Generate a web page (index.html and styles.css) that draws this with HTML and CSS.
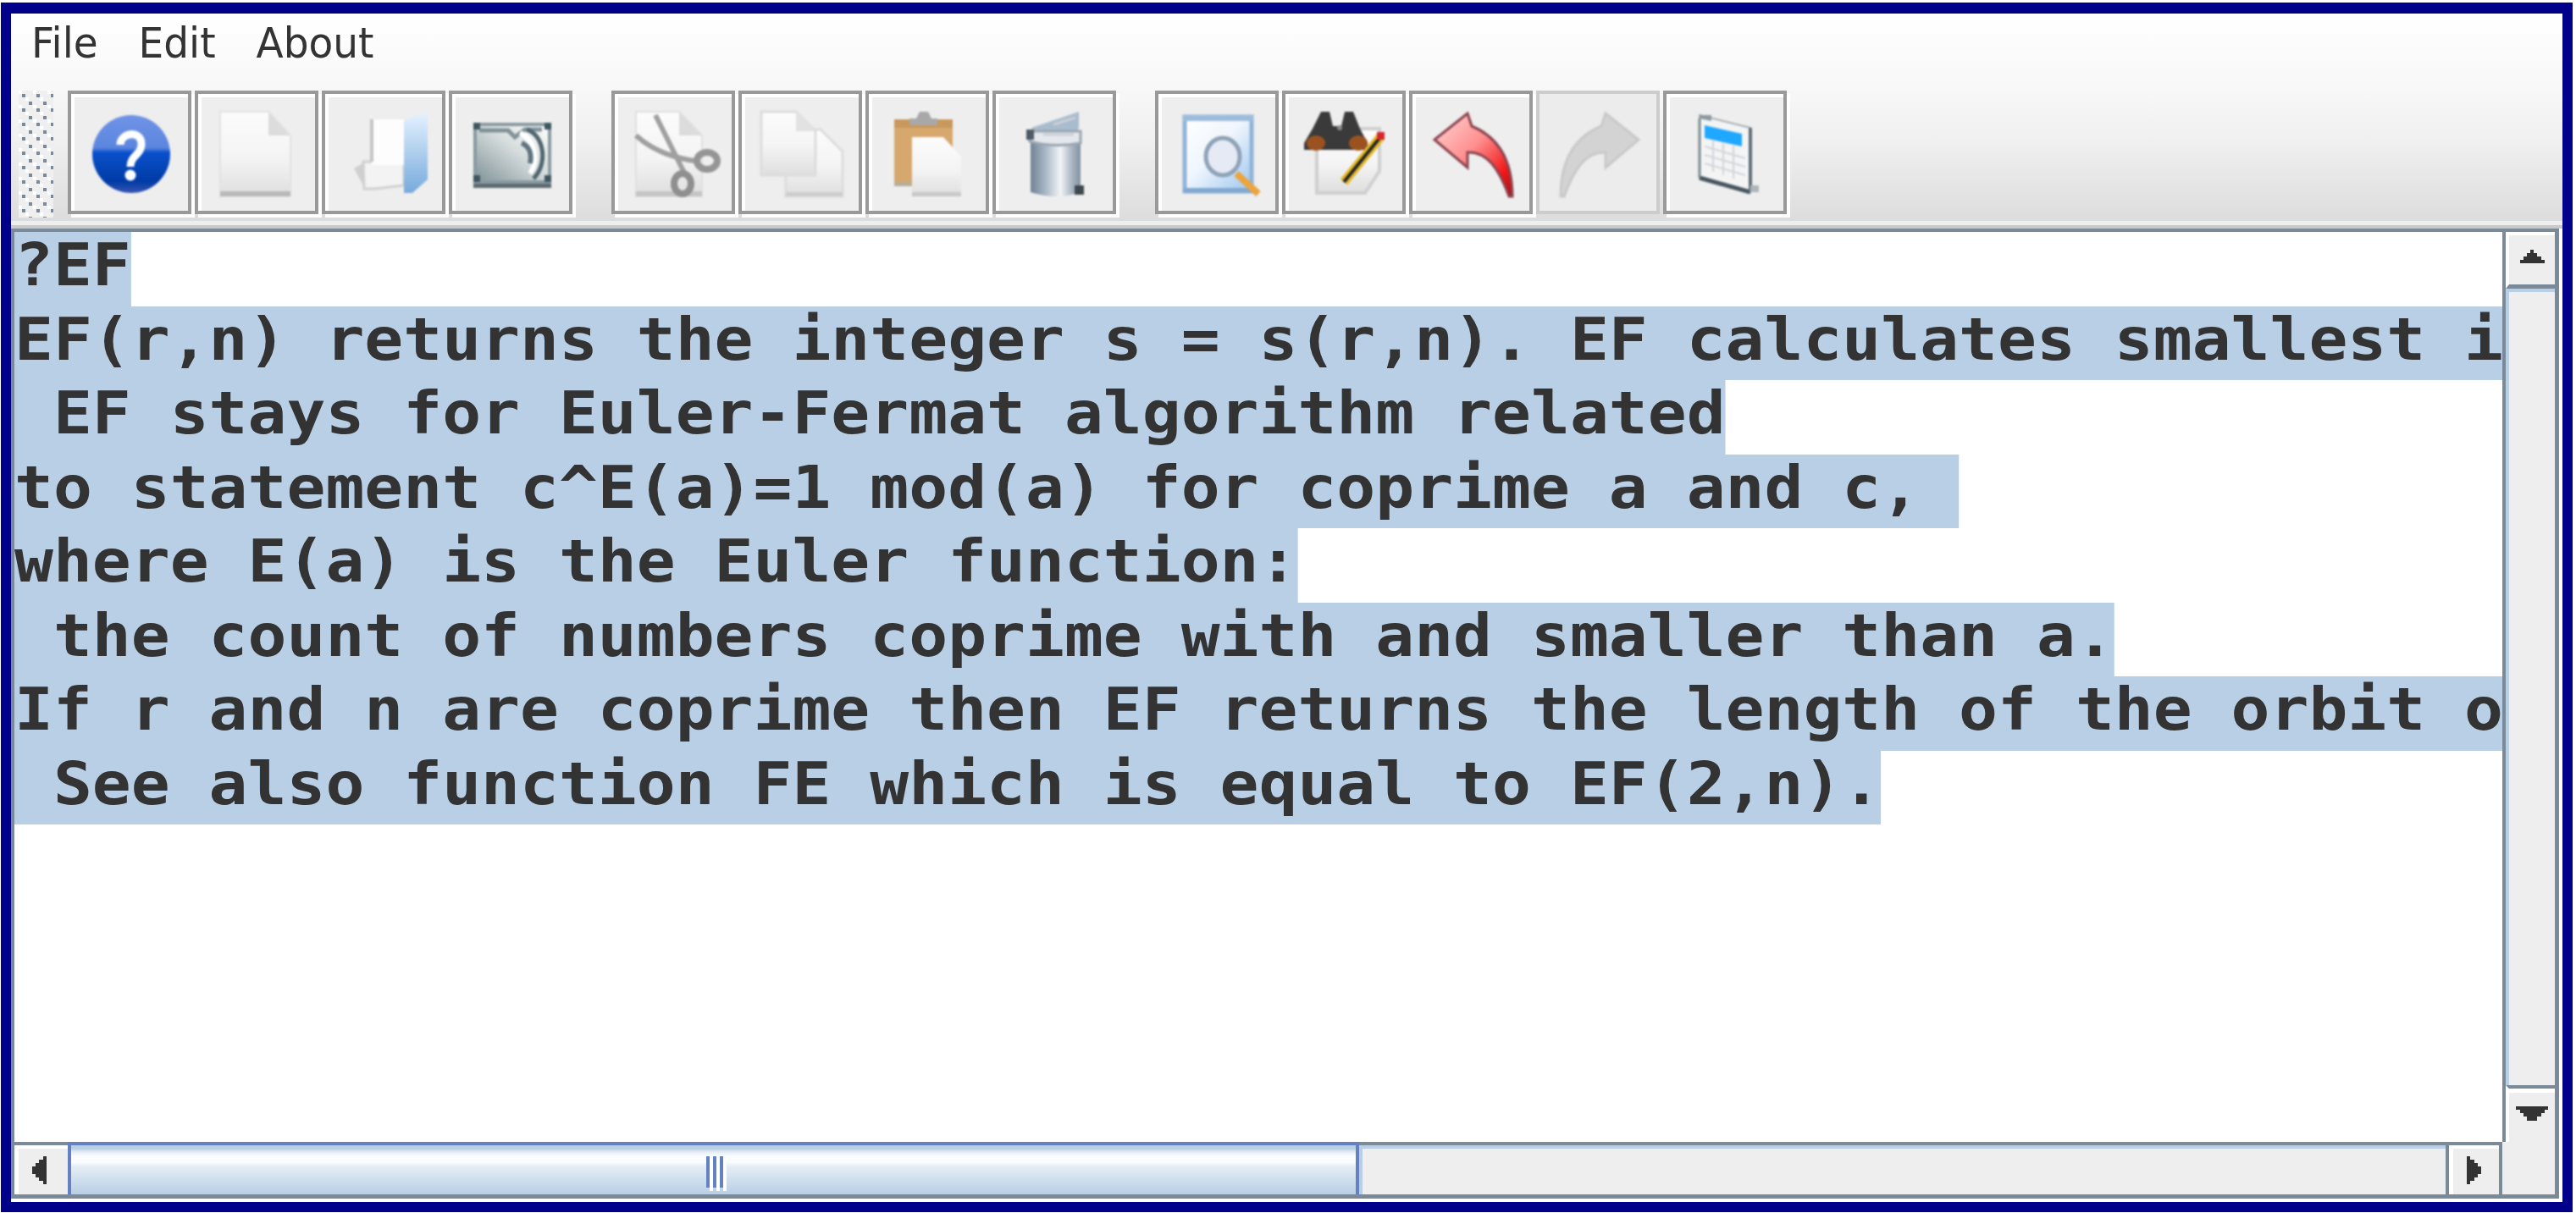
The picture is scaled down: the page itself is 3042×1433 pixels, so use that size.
FILE: index.html
```html
<!DOCTYPE html>
<html lang="en">
<head>
<meta charset="utf-8">
<title>EF</title>
<link rel="stylesheet" href="styles.css">
</head>
<body>
<svg class="defs" aria-hidden="true">
  <defs>
    <linearGradient id="gBlue" x1="0" y1="0" x2="0" y2="1"><stop offset="0" stop-color="#6f93e6"/><stop offset=".42" stop-color="#5c86df"/><stop offset=".48" stop-color="#0a50cc"/><stop offset=".85" stop-color="#003ba6"/><stop offset="1" stop-color="#3a55b0"/></linearGradient>
    <linearGradient id="gPage" x1="0" y1="0" x2="0" y2="1"><stop offset="0" stop-color="#fcfcfc"/><stop offset=".55" stop-color="#f4f4f4"/><stop offset="1" stop-color="#dedede"/></linearGradient>
    <linearGradient id="gFold" x1="0" y1="0" x2="0" y2="1"><stop offset="0" stop-color="#e6f3ff"/><stop offset="1" stop-color="#77aadc"/></linearGradient>
    <linearGradient id="gDrive" x1="0" y1="1" x2="1" y2="0"><stop offset="0" stop-color="#7f9298"/><stop offset=".55" stop-color="#d6dcdc"/><stop offset="1" stop-color="#ffffff"/></linearGradient>
    <linearGradient id="gTrash" x1="0" y1="0" x2="1" y2="0"><stop offset="0" stop-color="#6f8294"/><stop offset=".3" stop-color="#a9b8c6"/><stop offset=".6" stop-color="#f2f4f7"/><stop offset=".8" stop-color="#b0bcc7"/><stop offset="1" stop-color="#7f90a0"/></linearGradient>
    <linearGradient id="gFind" x1="0" y1="0" x2="1" y2="1"><stop offset="0" stop-color="#ffffff"/><stop offset=".45" stop-color="#f0f6fd"/><stop offset="1" stop-color="#9cc6ef"/></linearGradient>
    <linearGradient id="gUndo" x1="0" y1="0" x2="1" y2="1"><stop offset="0" stop-color="#ffd8d8"/><stop offset=".45" stop-color="#ff8f8f"/><stop offset=".8" stop-color="#f01818"/><stop offset="1" stop-color="#a81010"/></linearGradient>
    <pattern id="gripDots" width="17" height="17" patternUnits="userSpaceOnUse">
      <rect x="0" y="0" width="4" height="4" fill="#fff"/>
      <rect x="4" y="4" width="4" height="4" fill="#7a8a99"/>
      <rect x="8" y="8" width="4" height="4" fill="#fff"/>
      <rect x="12" y="13" width="4" height="4" fill="#7a8a99"/>
    </pattern>
  </defs>
</svg>

<div class="frame">
  <nav class="menu">
    <div class="menu-list">
      <span class="menu-item">File</span>
      <span class="menu-item">Edit</span>
      <span class="menu-item">About</span>
    </div>
  </nav>

  <div class="toolbar">
    <svg class="grip" width="41" height="150"><rect width="41" height="150" fill="#efefef"/><rect width="41" height="150" fill="url(#gripDots)"/></svg>
    <div class="tool-groups">
      <div class="tool-group">
        <div class="tool"><svg class="icon" viewBox="4 4 138 138">
          <circle cx="75" cy="75" r="46" fill="url(#gBlue)"/>
          <path d="M62 64C62 50 86 46 87 62C88 76 74 76 74 90" fill="none" stroke="#fff" stroke-width="9"/>
          <circle cx="74" cy="100" r="6.5" fill="#fff"/>
        </svg></div>
        <div class="tool"><svg class="icon" viewBox="4 4 138 138">
          <path d="M30 25H87L113 53V125H30Z" fill="url(#gPage)" stroke="#e2e2e2" stroke-width="2"/>
          <path d="M87 25V53H113Z" fill="#dcdcdc"/>
          <rect x="30" y="119" width="83" height="6" fill="#b9b9b9"/>
        </svg></div>
        <div class="tool"><svg class="icon" viewBox="4 4 138 138">
          <path d="M38 92L52 84L58 114H50Z" fill="#cfcfcf"/>
          <path d="M49 84H97V112L62 116H50Z" fill="#f3f3f3" stroke="#d0d0d0" stroke-width="3"/>
          <rect x="59" y="34" width="38" height="54" fill="#fdfdfd"/>
          <rect x="57" y="34" width="4" height="50" fill="#c4c4c4"/>
          <path d="M97 35L125 25V105L107 121H97Z" fill="url(#gFold)"/>
        </svg></div>
        <div class="tool"><svg class="icon" viewBox="4 4 138 138">
          <rect x="29" y="108" width="92" height="7" fill="#5c6b70"/>
          <rect x="31" y="40" width="88" height="68" fill="url(#gDrive)" stroke="#8a9aa0" stroke-width="4"/>
          <path d="M36 47H70L78 55L90 46H110" fill="none" stroke="#7f9298" stroke-width="5"/>
          <path d="M92 46C112 52 118 86 100 104" fill="none" stroke="#51666f" stroke-width="5"/>
          <path d="M84 50C102 58 106 84 96 98" fill="none" stroke="#fff" stroke-width="6"/>
          <path d="M86 62C96 66 98 76 96 86" fill="none" stroke="#5f7580" stroke-width="6"/>
          <path d="M29 38h8v8h-8zM113 38h8v8h-8zM29 100h8v8h-8zM113 100h8v8h-8z" fill="#3f5560"/>
        </svg></div>
      </div>
      <div class="tool-group">
        <div class="tool"><svg class="icon" viewBox="4 4 138 138">
          <path d="M29 25H80L107 53V125H29Z" fill="url(#gPage)" stroke="#e0e0e0" stroke-width="2"/>
          <path d="M80 25V53H107Z" fill="#dcdcdc"/>
          <rect x="29" y="119" width="78" height="6" fill="#c4c4c4"/>
          <path d="M52 29L86 97M29 53C50 72 75 80 104 84" fill="none" stroke="#a0a0a0" stroke-width="6"/>
          <ellipse cx="113" cy="83" rx="12" ry="10" fill="none" stroke="#959595" stroke-width="8"/>
          <ellipse cx="84" cy="110" rx="10" ry="12" fill="none" stroke="#8f8f8f" stroke-width="8"/>
        </svg></div>
        <div class="tool"><svg class="icon" viewBox="4 4 138 138">
          <path d="M56 46H97L123 72V125H56Z" fill="url(#gPage)" stroke="#dcdcdc" stroke-width="3"/>
          <rect x="56" y="120" width="67" height="5" fill="#cdcdcd"/>
          <path d="M27 25H68L91 48V100H27Z" fill="url(#gPage)" stroke="#dcdcdc" stroke-width="3"/>
          <path d="M68 25V48H91Z" fill="#e2e2e2"/>
        </svg></div>
        <div class="tool"><svg class="icon" viewBox="4 4 138 138">
          <rect x="34" y="34" width="69" height="79" fill="#d6a86e"/>
          <rect x="34" y="34" width="69" height="10" fill="#c9985c"/>
          <rect x="34" y="108" width="20" height="5" fill="#b8ad9c"/>
          <path d="M52 41V33H60L64 25H74L78 33H85V41Z" fill="#a8a8a8"/>
          <path d="M55 55H92L113 78V125H55Z" fill="url(#gPage)"/>
          <rect x="55" y="120" width="58" height="5" fill="#c8c8c8"/>
        </svg></div>
        <div class="tool"><svg class="icon" viewBox="4 4 138 138">
          <path d="M45 56H104V120Q75 130 45 120Z" fill="url(#gTrash)"/>
          <path d="M46 44L102 25V44L100 48L48 48Z" fill="#a9bccd"/>
          <path d="M42 48H104V62Q72 68 44 60Z" fill="#e4e8ec" stroke="#9aa6b1" stroke-width="3"/>
          <path d="M60 52H96M72 40L98 32" stroke="#c8d0d8" stroke-width="3"/>
          <rect x="40" y="46" width="9" height="12" fill="#4e5a64"/>
          <rect x="97" y="112" width="11" height="11" fill="#3f484f"/>
        </svg></div>
      </div>
      <div class="tool-group">
        <div class="tool"><svg class="icon" viewBox="4 4 138 138">
          <rect x="35" y="31" width="79" height="88" fill="url(#gFind)" stroke="#8fb2d6" stroke-width="5"/>
          <rect x="33" y="29" width="83" height="7" fill="#9dbcdb"/>
          <rect x="33" y="115" width="83" height="6" fill="#82a8d2"/>
          <ellipse cx="80" cy="78" rx="20" ry="22" fill="#e6eaf4" stroke="#8fa3b8" stroke-width="5"/>
          <path d="M96 98L122 122" stroke="#eaa53f" stroke-width="8"/>
        </svg></div>
        <div class="tool"><svg class="icon" viewBox="4 4 138 138">
          <path d="M41 45H115V95L98 121H41Z" fill="url(#gPage)" stroke="#cfcfcf" stroke-width="4"/>
          <path d="M46 25H56L60 42H70L74 25H84L92 45L101 62V70H26V62L36 45Z" fill="#3a3a3a"/>
          <circle cx="68" cy="44" r="3" fill="#8a8a8a"/>
          <ellipse cx="40" cy="62" rx="11" ry="9" fill="#9c5220"/>
          <ellipse cx="90" cy="62" rx="11" ry="9" fill="#9c5220"/>
          <path d="M73 108L116 55" stroke="#e3b92b" stroke-width="11"/>
          <path d="M73 108L116 55" stroke="#222" stroke-width="4"/>
          <rect x="112" y="49" width="9" height="9" fill="#d8252c"/>
        </svg></div>
        <div class="tool"><svg class="icon" viewBox="4 4 138 138">
          <path d="M69 27L30 58L69 91V73C92 72 106 92 118 125H122C122 86 108 56 74 42Z" fill="url(#gUndo)" stroke="#8c4450" stroke-width="3"/>
        </svg></div>
        <div class="tool tool-off"><svg class="icon" viewBox="4 4 138 138">
          <path d="M82 27L121 58L82 91V73C59 72 45 92 33 125H29C29 86 43 56 77 42Z" fill="#d3d3d3" stroke="#c9c9c9" stroke-width="3"/>
        </svg></div>
        <div class="tool"><svg class="icon" viewBox="4 4 138 138">
          <path d="M43 29L103 44V120L43 103Z" fill="#f4f4f4" stroke="#a5aeb4" stroke-width="2"/>
          <path d="M49 41L93 51V66L49 56Z" fill="#1fa8ff"/>
          <path d="M43 29H57V36L43 33Z" fill="#8b9aa0"/>
          <path d="M43 103L103 120" stroke="#46555f" stroke-width="5"/>
          <path d="M43 33V103" stroke="#7b8891" stroke-width="3"/>
          <path d="M103 44V120" stroke="#5e6c76" stroke-width="4"/>
          <path d="M49 66L97 80M49 76L97 90M49 86L97 100M59 58V96M71 62V100M83 65V104" stroke="#d0d6db" stroke-width="2"/>
          <rect x="103" y="112" width="10" height="8" fill="#aeb4b8"/>
        </svg></div>
      </div>
    </div>
  </div>
  <div class="separator"></div>

  <div class="pane">
    <div class="pane-box">
      <div class="pane-main">
        <div class="viewport">
          <div class="text">
            <div class="line"><span class="sel">?EF</span></div>
            <div class="line"><span class="sel">EF(r,n) returns the integer s = s(r,n). EF calculates smallest i</span></div>
            <div class="line"><span class="sel"> EF stays for Euler-Fermat algorithm related</span></div>
            <div class="line"><span class="sel">to statement c^E(a)=1 mod(a) for coprime a and c, </span></div>
            <div class="line"><span class="sel">where E(a) is the Euler function:</span></div>
            <div class="line"><span class="sel"> the count of numbers coprime with and smaller than a.</span></div>
            <div class="line"><span class="sel">If r and n are coprime then EF returns the length of the orbit o</span></div>
            <div class="line"><span class="sel"> See also function FE which is equal to EF(2,n).</span></div>
          </div>
        </div>
        <div class="vbar">
          <div class="vbtn vbtn-up"><svg class="arrow" width="29" height="16" viewBox="0 0 29 16"><path d="M12 0h4v4h4v4h5v4h4v4H0v-4h4V8h4V4h4z"/></svg></div>
          <div class="vtrack"></div>
          <div class="vbtn vbtn-down"><svg class="arrow" width="38" height="17" viewBox="0 0 38 17"><path d="M0 0h38v4h-4v4h-4v4h-5v5H13v-5H9V8H5V4H0z"/></svg></div>
        </div>
      </div>
      <div class="hbar">
        <div class="hbtn hbtn-left"><svg class="arrow" width="17" height="33" viewBox="0 0 17 33"><path d="M17 0v33h-4v-4H8v-4H4v-4H0V12h4V8h4V4h5V0z"/></svg></div>
        <div class="hthumb">
          <div class="grips"><i class="grip-line"></i><i class="grip-line"></i><i class="grip-line"></i></div>
        </div>
        <div class="htrack"></div>
        <div class="hbtn hbtn-right"><svg class="arrow" width="17" height="33" viewBox="0 0 17 33"><path d="M0 0v33h4v-4h5v-4h4v-4h4V12h-4V8H9V4H4V0z"/></svg></div>
        <div class="corner"></div>
      </div>
    </div>
  </div>
</div>
</body>
</html>
```
FILE: styles.css
```css
* { box-sizing: border-box; }
html, body { margin: 0; padding: 0; background: #fff; }
body { width: 3042px; height: 1433px; overflow: hidden; padding: 3px 4px 1px 1px; }
.defs { position: absolute; width: 0; height: 0; }

.frame {
  width: 3037px;
  height: 1429px;
  border: solid #00008b;
  border-width: 13px 12px 12px 12px;
  display: flex;
  flex-direction: column;
  background: linear-gradient(180deg, #ffffff 0, #f8f8f8 85px, #f0f0f0 150px, #dcdcdc 245px);
  background-repeat: no-repeat;
}

/* Menu */
.menu { height: 79px; padding-left: 24px; flex: none; overflow: hidden; }
.menu-list {
  display: flex;
  gap: 51px;
  transform: scaleX(.94);
  transform-origin: 0 0;
  font: 50px/71px "DejaVu Sans", sans-serif;
  color: #333;
}

/* Toolbar */
.toolbar { height: 166px; flex: none; display: flex; padding: 12px 0 8px 9px; align-items: flex-start; }
.grip { display: block; flex: none; margin-right: 17px; }
.tool-groups { display: flex; gap: 46px; }
.tool-group { display: flex; gap: 4px; }
.tool {
  width: 146px;
  height: 146px;
  border: 4px solid #999;
  background: #eee;
  box-shadow: inset 4px 4px 0 #fff, 4px 4px 0 #fff;
}
.tool-off { border-color: #ccc; box-shadow: none; background: #ececec; }
.icon { display: block; width: 138px; height: 138px; filter: blur(1.2px); }
.separator { height: 9px; flex: none; background: #eee; border-bottom: 4px solid #c9c9c9; }

/* Scroll pane */
.pane { flex: 1; min-height: 0; background: #fff; padding: 0 4px 4px 0; display: flex; }
.pane-box {
  flex: 1;
  min-width: 0;
  display: flex;
  flex-direction: column;
  border-top: 4px solid #7a8a99;
  border-left: 4px solid #7a8a99;
  border-right: 5px solid #7a8a99;
}
.pane-main { flex: 1; min-height: 0; display: flex; }
.viewport { flex: 1; min-width: 0; overflow: hidden; background: #fff; }
.text {
  width: 2700px;
  transform: scaleX(1.112);
  transform-origin: 0 0;
  font: bold 68.6px "DejaVu Sans Mono", monospace;
  color: #333;
}
.line { height: 87.5px; }
.sel { display: inline-block; height: 87.5px; line-height: 79px; background: #b8cfe5; vertical-align: top; white-space: pre; }

/* Vertical scrollbar */
.vbar { width: 62px; flex: none; display: flex; flex-direction: column; border-left: 4px solid #7a8a99; }
.vbtn { height: 67px; flex: none; background: #eee; display: flex; justify-content: center; }
.vbtn-up { border-top: 4px solid #fff; border-left: 4px solid #fff; border-bottom: 5px solid #7a8a99; padding-top: 17px; }
.vbtn-down { border-top: 4px solid #7a8a99; border-left: 4px solid #fff; padding-top: 21px; box-shadow: inset 0 5px 0 #fff; }
.vtrack { flex: 1; background: #eee; border-top: 4px solid #b8cfe5; border-left: 4px solid #b8cfe5; }
.arrow { display: block; fill: #333; shape-rendering: crispEdges; }

/* Horizontal scrollbar */
.hbar { height: 67px; flex: none; display: flex; background: #eee; border-bottom: 5px solid #7a8a99; }
.hbtn { flex: none; border-top: 4px solid #7a8a99; background: #eee; box-shadow: inset 0 4px 0 #fff; padding-top: 13px; }
.hbtn-left { width: 63px; box-shadow: inset 5px 4px 0 #fff; padding-left: 21px; }
.hbtn-right { width: 67px; border-left: 4px solid #7a8a99; border-right: 4px solid #7a8a99; box-shadow: inset 5px 4px 0 #fff; padding-left: 21px; }
.hthumb {
  width: 1525px;
  flex: none;
  position: relative;
  border: solid #6382bf;
  border-width: 4px 4px 0 4px;
  background: linear-gradient(180deg, #b8cfe5 0, #b8cfe5 4px, #e6edf4 8px, #fbfcfe 13px, #fbfcfe 20px, #e4edf5 25px, #b8cfe5 58px);
}
.grips { position: absolute; left: 750px; top: 13px; display: flex; gap: 4px; }
.grip-line { display: block; width: 4px; height: 37px; background: #6382bf; box-shadow: 4px 4px 0 #fff; }
.htrack { flex: 1; border-top: 4px solid #7a8a99; background: #eee; box-shadow: inset 4px 4px 0 #b8cfe5; }
.corner { width: 62px; flex: none; background: #eee; }
```
